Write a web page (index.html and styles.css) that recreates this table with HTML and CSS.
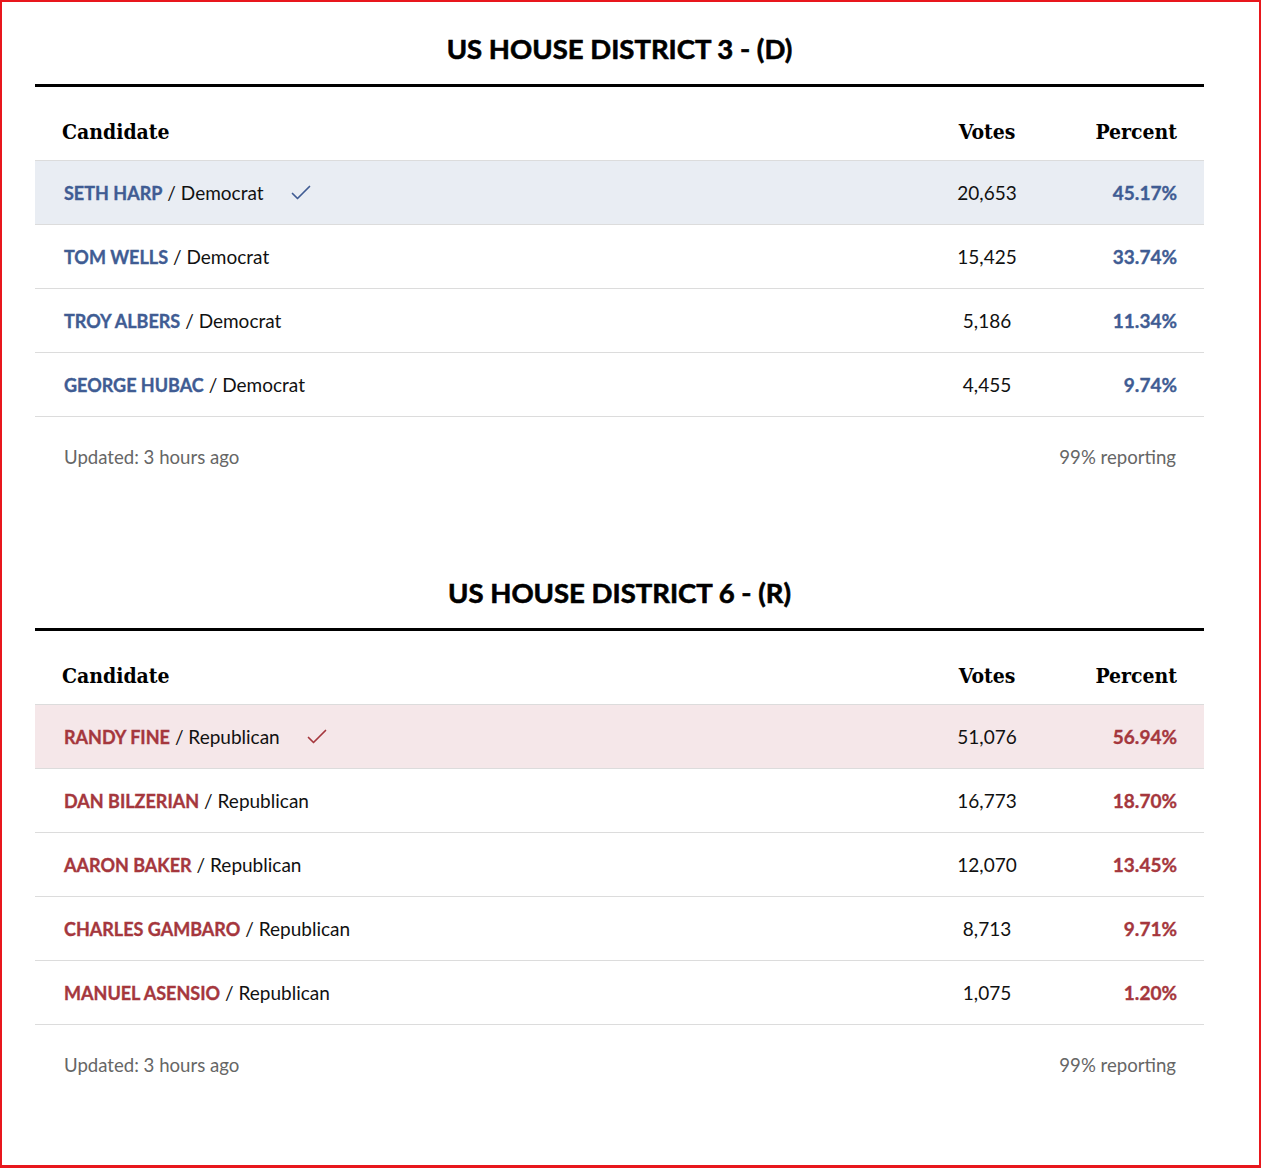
FILE: index.html
```html
<!DOCTYPE html>
<html lang="en">
<head>
<meta charset="utf-8">
<title>US House Results</title>
<link rel="stylesheet" href="styles.css">
</head>
<body>
<div class="frame">

  <section class="race dem">
    <h2 class="race-title">US HOUSE DISTRICT 3 - (D)</h2>
    <div class="results">
      <div class="row head">
        <div class="c-name">Candidate</div>
        <div class="c-votes">Votes</div>
        <div class="c-pct">Percent</div>
      </div>
      <div class="row winner">
        <div class="c-name"><span class="cand">SETH HARP</span> / Democrat<svg class="check" viewBox="0 0 20 16" width="20" height="16"><polyline points="1.5,8.5 6.5,13.5 18.5,1.5"/></svg></div>
        <div class="c-votes">20,653</div>
        <div class="c-pct">45.17%</div>
      </div>
      <div class="row">
        <div class="c-name"><span class="cand">TOM WELLS</span> / Democrat</div>
        <div class="c-votes">15,425</div>
        <div class="c-pct">33.74%</div>
      </div>
      <div class="row">
        <div class="c-name"><span class="cand">TROY ALBERS</span> / Democrat</div>
        <div class="c-votes">5,186</div>
        <div class="c-pct">11.34%</div>
      </div>
      <div class="row">
        <div class="c-name"><span class="cand">GEORGE HUBAC</span> / Democrat</div>
        <div class="c-votes">4,455</div>
        <div class="c-pct">9.74%</div>
      </div>
      <div class="foot">
        <span>Updated: 3 hours ago</span>
        <span>99% reporting</span>
      </div>
    </div>
  </section>

  <section class="race rep">
    <h2 class="race-title">US HOUSE DISTRICT 6 - (R)</h2>
    <div class="results">
      <div class="row head">
        <div class="c-name">Candidate</div>
        <div class="c-votes">Votes</div>
        <div class="c-pct">Percent</div>
      </div>
      <div class="row winner">
        <div class="c-name"><span class="cand">RANDY FINE</span> / Republican<svg class="check" viewBox="0 0 20 16" width="20" height="16"><polyline points="1.5,8.5 6.5,13.5 18.5,1.5"/></svg></div>
        <div class="c-votes">51,076</div>
        <div class="c-pct">56.94%</div>
      </div>
      <div class="row">
        <div class="c-name"><span class="cand">DAN BILZERIAN</span> / Republican</div>
        <div class="c-votes">16,773</div>
        <div class="c-pct">18.70%</div>
      </div>
      <div class="row">
        <div class="c-name"><span class="cand">AARON BAKER</span> / Republican</div>
        <div class="c-votes">12,070</div>
        <div class="c-pct">13.45%</div>
      </div>
      <div class="row">
        <div class="c-name"><span class="cand">CHARLES GAMBARO</span> / Republican</div>
        <div class="c-votes">8,713</div>
        <div class="c-pct">9.71%</div>
      </div>
      <div class="row">
        <div class="c-name"><span class="cand">MANUEL ASENSIO</span> / Republican</div>
        <div class="c-votes">1,075</div>
        <div class="c-pct">1.20%</div>
      </div>
      <div class="foot">
        <span>Updated: 3 hours ago</span>
        <span>99% reporting</span>
      </div>
    </div>
  </section>

</div>
</body>
</html>
```

FILE: styles.css
```css
html, body {
  margin: 0;
  padding: 0;
  background: #ffffff;
}

body {
  font-family: Lato, "Open Sans", "Liberation Sans", sans-serif;
  color: #111111;
}

.frame {
  box-sizing: border-box;
  width: 1261px;
  height: 1168px;
  border-style: solid;
  border-color: #e8171d;
  border-width: 2px 2px 3px 2px;
  padding: 29px 0 0 33px;
  overflow: hidden;
}

.race {
  width: 1169px;
  margin-bottom: 78px;
}

.race-title {
  margin: 0;
  padding-bottom: 17px;
  border-bottom: 3px solid #000000;
  font-family: Lato, "Open Sans", sans-serif;
  font-weight: 700;
  font-size: 27.5px;
  line-height: 36px;
  text-align: center;
  color: #000000;
  -webkit-text-stroke: 0.6px #000000;
}

.results {
  display: flex;
  flex-direction: column;
}

.row {
  display: grid;
  grid-template-columns: 1fr 120px 157px;
  align-items: center;
  height: 64px;
  box-sizing: border-box;
  border-bottom: 1px solid #dcdcdc;
  font-size: 19px;
  line-height: 24px;
}

.row.head {
  height: 74px;
  padding-top: 16px;
  font-family: "DejaVu Serif Condensed", "DejaVu Serif", "Liberation Serif", serif;
  font-stretch: condensed;
  font-weight: 700;
  font-size: 21px;
  color: #000000;
}

.row.head .c-name {
  padding-left: 27px;
}

.c-name {
  padding-left: 29px;
  display: flex;
  align-items: center;
  white-space: nowrap;
}

.c-votes {
  text-align: center;
}

.c-pct {
  text-align: right;
  padding-right: 27px;
  font-weight: 700;
}

.row:not(.head) .c-pct,
.cand {
  -webkit-text-stroke: 0.35px currentColor;
}

.row.head .c-pct {
  color: #000000;
}

.cand {
  font-weight: 700;
  font-size: 18px;
  margin-right: 5px;
}

.check {
  margin-left: 27px;
  fill: none;
  stroke-width: 1.7;
  stroke-linecap: round;
  stroke-linejoin: round;
}

.dem .cand,
.dem .row:not(.head) .c-pct {
  color: #405c93;
}

.dem .check {
  stroke: #405c93;
}

.dem .winner {
  background: #e9edf3;
}

.rep .cand,
.rep .row:not(.head) .c-pct {
  color: #a5373d;
}

.rep .check {
  stroke: #a5373d;
}

.rep .winner {
  background: #f5e7e9;
}

.foot {
  display: flex;
  justify-content: space-between;
  padding: 28px 28px 28px 29px;
  font-size: 18.6px;
  line-height: 24px;
  color: #666666;
}
```
